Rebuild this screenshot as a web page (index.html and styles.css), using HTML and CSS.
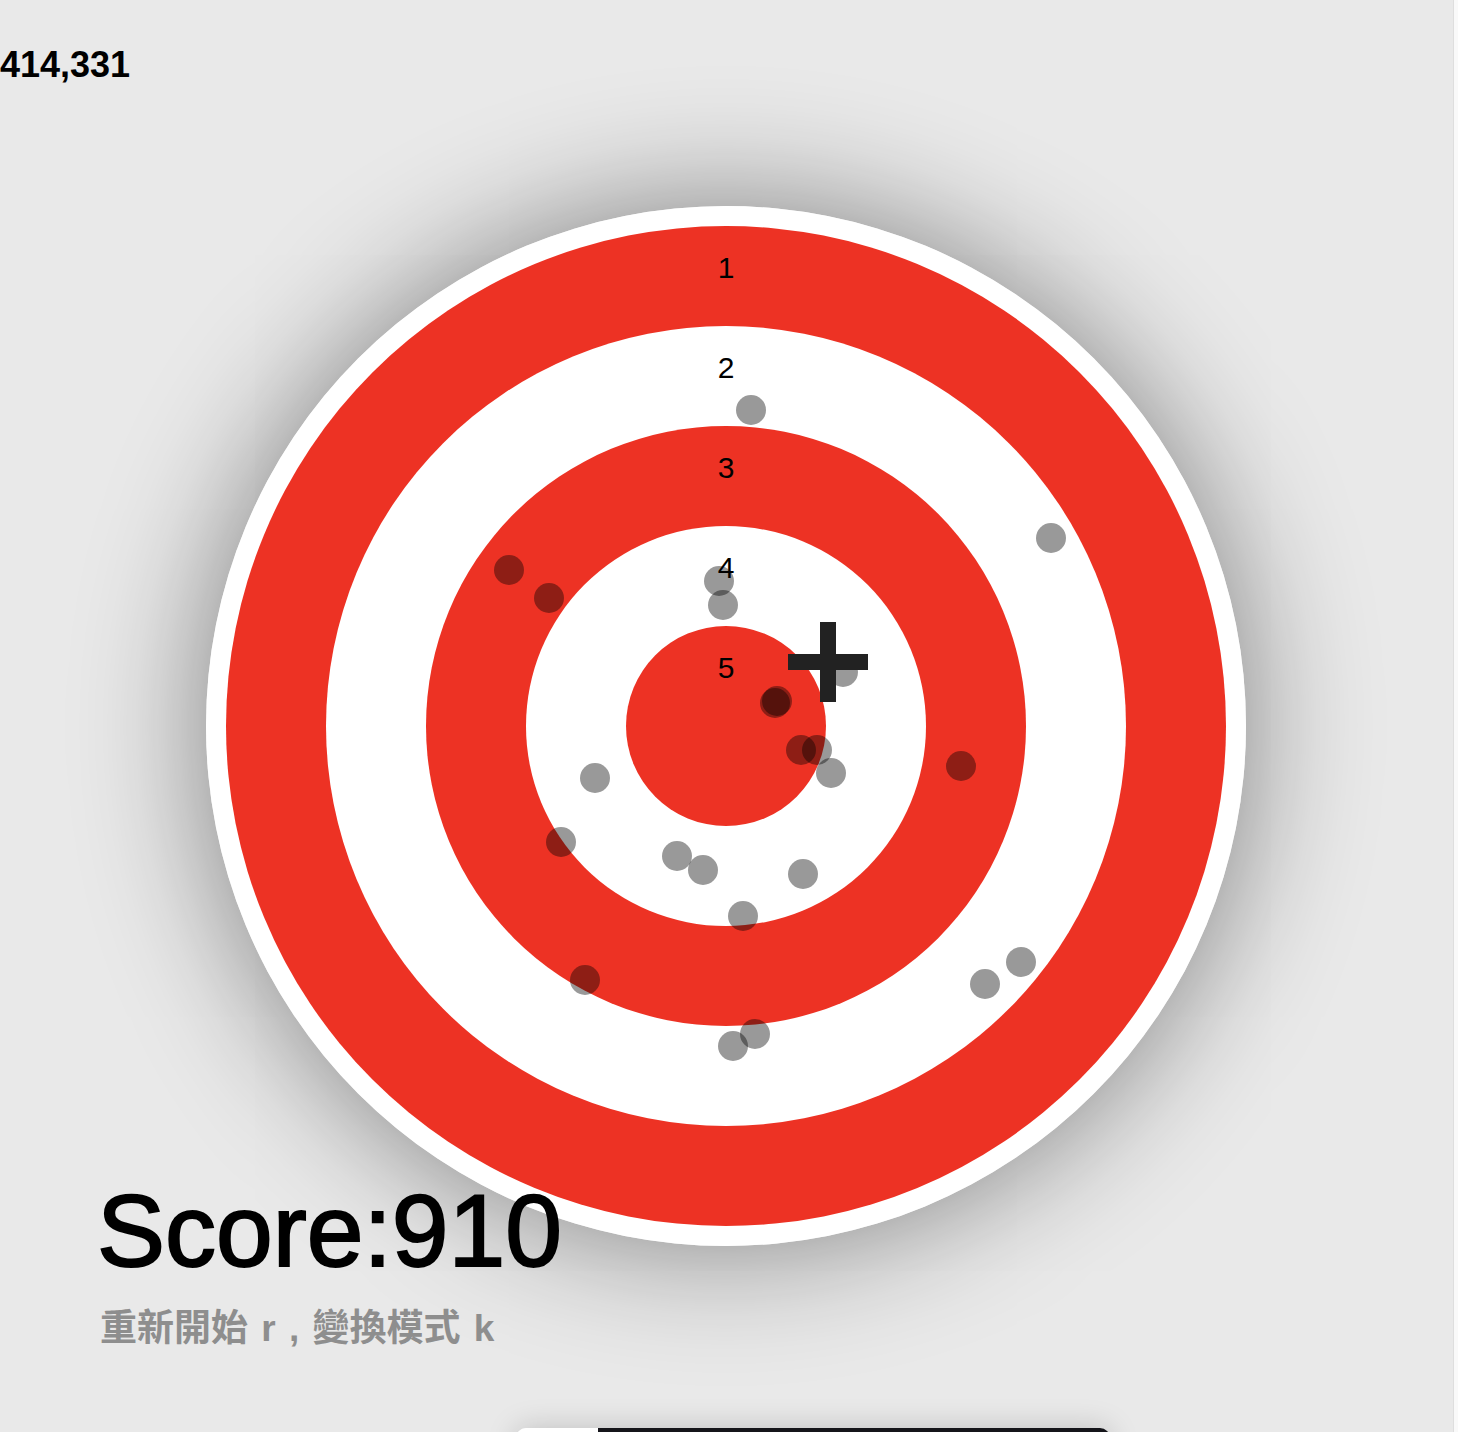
FILE: index.html
```html
<!DOCTYPE html>
<html lang="zh-Hant">
<head>
<meta charset="utf-8">
<title>Target</title>
<link rel="stylesheet" href="styles.css">
</head>
<body>
<div class="page">
  <main class="stage">
    <div class="coords">414,331</div>
    <div class="target">
      <svg class="board" width="1040" height="1040" viewBox="0 0 1040 1040">
        <circle cx="520" cy="520" r="520" fill="#ffffff"/>
        <circle cx="520" cy="520" r="500" fill="#ed3224"/>
        <circle cx="520" cy="520" r="400" fill="#ffffff"/>
        <circle cx="520" cy="520" r="300" fill="#ed3224"/>
        <circle cx="520" cy="520" r="200" fill="#ffffff"/>
        <circle cx="520" cy="520" r="100" fill="#ed3224"/>
        <g class="ring-num" text-anchor="middle">
          <text x="520" y="71.5">1</text>
          <text x="520" y="171.5">2</text>
          <text x="520" y="271.5">3</text>
          <text x="520" y="371.5">4</text>
          <text x="520" y="471.5">5</text>
        </g>
        <g fill="rgba(0,0,0,0.4)">
          <circle cx="545" cy="204" r="15"/>
          <circle cx="845" cy="332" r="15"/>
          <circle cx="303" cy="364" r="15"/>
          <circle cx="343" cy="392" r="15"/>
          <circle cx="513" cy="375" r="15"/>
          <circle cx="517" cy="399" r="15"/>
          <circle cx="637" cy="466" r="15"/>
          <circle cx="569" cy="497" r="15"/>
          <circle cx="571" cy="495" r="15"/>
          <circle cx="595" cy="544" r="15"/>
          <circle cx="611" cy="544" r="15"/>
          <circle cx="625" cy="567" r="15"/>
          <circle cx="755" cy="560" r="15"/>
          <circle cx="389" cy="572" r="15"/>
          <circle cx="355" cy="636" r="15"/>
          <circle cx="471" cy="650" r="15"/>
          <circle cx="497" cy="664" r="15"/>
          <circle cx="597" cy="668" r="15"/>
          <circle cx="537" cy="710" r="15"/>
          <circle cx="379" cy="774" r="15"/>
          <circle cx="779" cy="778" r="15"/>
          <circle cx="815" cy="756" r="15"/>
          <circle cx="549" cy="828" r="15"/>
          <circle cx="527" cy="840" r="15"/>
        </g>
        <g fill="#222222">
          <rect x="614" y="416" width="16" height="80"/>
          <rect x="582" y="448" width="80" height="16"/>
        </g>
      </svg>
    </div>
    <div class="score">Score:910</div>
    <div class="hint">重新開始 r , 變換模式 k</div>
    <div class="dock">
      <div class="dock-light"></div>
      <div class="dock-dark"></div>
    </div>
  </main>
  <div class="edge"></div>
</div>
</body>
</html>
```
FILE: styles.css
```css
html, body {
  margin: 0;
  padding: 0;
  height: 1432px;
  overflow: hidden;
}

body {
  background: #e9e9e9;
  font-family: "Liberation Sans", Arial, sans-serif;
  color: #000;
}

.page {
  display: flex;
  height: 1432px;
}

.stage {
  width: 1453px;
  display: flex;
  flex-direction: column;
  overflow: hidden;
}

.edge {
  flex: 1;
  background: #f9f9f9;
  border-left: 1px solid #dedede;
}

.coords {
  padding-top: 44px;
  height: 42px;
  font-size: 36px;
  line-height: 42px;
  font-weight: bold;
}

.target {
  align-self: flex-start;
  margin-top: 120px;
  margin-left: 206px;
  width: 1040px;
  height: 1040px;
  border-radius: 50%;
  box-shadow: 0 0 130px rgba(0, 0, 0, 0.45);
}

.board {
  display: block;
}

.ring-num {
  font-family: "Liberation Sans", Arial, sans-serif;
  font-size: 30px;
  fill: #000;
}

.score {
  position: relative;
  margin-top: -66px;
  padding-left: 97px;
  font-size: 102px;
  line-height: 102px;
  height: 102px;
  -webkit-text-stroke: 2px #000;
}

.hint {
  margin-top: 28px;
  padding-left: 100px;
  font-family: "Liberation Sans", "Noto Sans CJK TC", sans-serif;
  font-weight: bold;
  font-size: 37px;
  line-height: 37px;
  word-spacing: 3px;
  color: #8e8e8e;
}

.dock {
  margin-top: 81px;
  margin-left: 516px;
  width: 594px;
  height: 40px;
  flex-shrink: 0;
  display: flex;
  border-radius: 10px 10px 0 0;
  overflow: hidden;
  box-shadow: 0 0 30px rgba(0, 0, 0, 0.18);
}

.dock-light {
  width: 82px;
  background: #ffffff;
}

.dock-dark {
  flex: 1;
  background: #15151a;
}
```
